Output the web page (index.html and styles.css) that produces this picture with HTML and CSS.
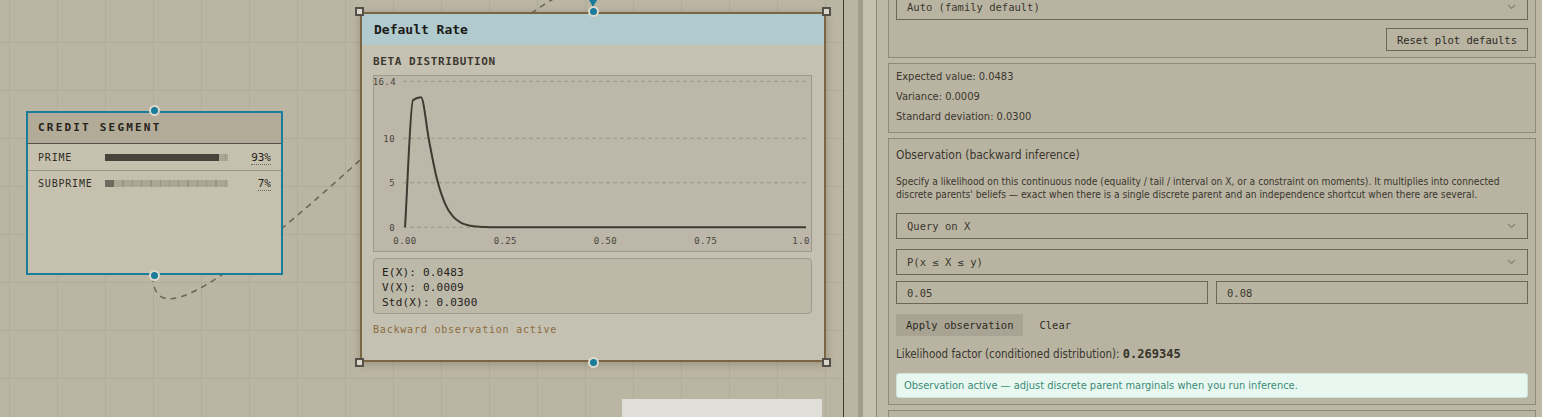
FILE: index.html
```html
<!DOCTYPE html>
<html>
<head>
    <link rel="stylesheet" href="styles.css">
    <title>Default Rate - Beta distribution</title>
</head>
<body>
<div class="app">
    <div class="canvas">
        <!-- edges sit under the nodes -->
        <svg class="edges" width="843" height="417">
            <path class="edge" d="M153 276 C153 412 593 -110 593 6"></path>
            <path class="edge-arrow" d="M589 0 L597 0 L593 7 Z"></path>
        </svg>

        <div class="node node-credit">
            <div class="node-header">CREDIT SEGMENT</div>
            <div class="state-row">
                <span class="state-name">PRIME</span>
                <span class="state-bar"><span class="state-fill" style="width: 93%"></span></span>
                <span class="state-value"><span>93%</span></span>
            </div>
            <div class="state-row">
                <span class="state-name">SUBPRIME</span>
                <span class="state-bar"><span class="state-fill state-fill-low" style="width: 7%"></span></span>
                <span class="state-value"><span>7%</span></span>
            </div>
            <span class="port port-top"></span>
            <span class="port port-bottom"></span>
        </div>

        <div class="node node-rate">
            <div class="node-header">Default Rate</div>
            <div class="node-body">
                <div class="dist-label">BETA DISTRIBUTION</div>
                <div class="chart">
                    <svg width="436" height="175">
                        <g class="grid">
                            <line x1="29" y1="5.3" x2="434" y2="5.3"></line>
                            <line x1="29" y1="62.3" x2="434" y2="62.3"></line>
                            <line x1="29" y1="106.8" x2="434" y2="106.8"></line>
                            <line x1="29" y1="151.3" x2="434" y2="151.3"></line>
                        </g>
                        <g class="y-labels">
                            <text x="22" y="8.5">16.4</text>
                            <text x="21" y="65.5">10</text>
                            <text x="21" y="110">5</text>
                            <text x="21" y="154.5">0</text>
                        </g>
                        <g class="x-labels">
                            <text x="31" y="168">0.00</text>
                            <text x="131.3" y="168">0.25</text>
                            <text x="231.5" y="168">0.50</text>
                            <text x="331.8" y="168">0.75</text>
                            <text x="430" y="168">1.00</text>
                        </g>
                        <path id="pdfCurve" class="curve" d=""></path>
                    </svg>
                </div>
                <div class="stats">
                    <div>E(X): 0.0483</div>
                    <div>V(X): 0.0009</div>
                    <div>Std(X): 0.0300</div>
                </div>
                <div class="obs-note">Backward observation active</div>
            </div>
            <span class="port port-top"></span>
            <span class="port port-bottom"></span>
            <span class="handle handle-tl"></span>
            <span class="handle handle-tr"></span>
            <span class="handle handle-bl"></span>
            <span class="handle handle-br"></span>
        </div>

        <div class="minimap"></div>
    </div>

    <div class="splitter"></div>

    <div class="panel">
        <div class="panel-scroll">
            <div class="section section-plot">
                <div class="select-wrap">
                    <select>
                        <option>Auto (family default)</option>
                    </select>
                    <svg class="chevron" width="9" height="6" viewBox="0 0 9 6"><polyline points="1,1 4.5,4.5 8,1"></polyline></svg>
                </div>
                <div class="reset-row">
                    <button type="button" class="btn-outline">Reset plot defaults</button>
                </div>
            </div>

            <div class="section section-stats">
                <p>Expected value: 0.0483</p>
                <p>Variance: 0.0009</p>
                <p>Standard deviation: 0.0300</p>
            </div>

            <div class="section section-obs">
                <h3 class="section-title">Observation (backward inference)</h3>
                <p class="section-desc">Specify a likelihood on this continuous node (equality / tail / interval on X, or a constraint on moments). It multiplies into connected discrete parents' beliefs — exact when there is a single discrete parent and an independence shortcut when there are several.</p>
                <div class="select-wrap select-query">
                    <select>
                        <option>Query on X</option>
                    </select>
                    <svg class="chevron" width="9" height="6" viewBox="0 0 9 6"><polyline points="1,1 4.5,4.5 8,1"></polyline></svg>
                </div>
                <div class="select-wrap select-kind">
                    <select>
                        <option>P(x ≤ X ≤ y)</option>
                    </select>
                    <svg class="chevron" width="9" height="6" viewBox="0 0 9 6"><polyline points="1,1 4.5,4.5 8,1"></polyline></svg>
                </div>
                <div class="range-row">
                    <input type="text" value="0.05">
                    <input type="text" value="0.08">
                </div>
                <div class="action-row">
                    <button type="button" class="btn-apply">Apply observation</button>
                    <button type="button" class="btn-plain">Clear</button>
                </div>
                <div class="likelihood">Likelihood factor (conditioned distribution): <span class="likelihood-value">0.269345</span></div>
                <div class="notice">Observation active — adjust discrete parent marginals when you run inference.</div>
            </div>

            <div class="section section-next"></div>
        </div>
    </div>
</div>

<script>
    // log-gamma (Lanczos approximation)
    function lgamma(x) {
        var c = [0.99999999999980993, 676.5203681218851, -1259.1392167224028,
            771.32342877765313, -176.61502916214059, 12.507343278686905,
            -0.13857109526572012, 9.9843695780195716e-6, 1.5056327351493116e-7];
        if (x < 0.5) {
            return Math.log(Math.PI / Math.sin(Math.PI * x)) - lgamma(1 - x);
        }
        x -= 1;
        var a = c[0];
        var t = x + 7.5;
        for (var i = 1; i < 9; i++) {
            a += c[i] / (x + i);
        }
        return 0.5 * Math.log(2 * Math.PI) + (x + 0.5) * Math.log(t) - t + Math.log(a);
    }

    // Beta parameters from mean and standard deviation
    var mean = 0.0483, sd = 0.03;
    var k = mean * (1 - mean) / (sd * sd) - 1;
    var a = mean * k, b = (1 - mean) * k;
    var lnB = lgamma(a) + lgamma(b) - lgamma(a + b);

    var xs = [], ys = [];
    for (var i = 0; i <= 50; i++) {
        var x = i / 50;
        var y = 0;
        if (x > 0 && x < 1) {
            y = Math.exp((a - 1) * Math.log(x) + (b - 1) * Math.log(1 - x) - lnB);
        }
        xs.push(31 + x * 401);
        ys.push(151.3 - y * 8.902);
    }

    // monotone cubic through the samples (no overshoot at the peak)
    var n = xs.length;
    var s = [], t = [];
    for (var i = 0; i < n - 1; i++) {
        s.push((ys[i + 1] - ys[i]) / (xs[i + 1] - xs[i]));
    }
    t[0] = s[0];
    t[n - 1] = s[n - 2];
    for (var i = 1; i < n - 1; i++) {
        if (s[i - 1] * s[i] <= 0) {
            t[i] = 0;
        } else {
            var p = (s[i - 1] + s[i]) / 2;
            t[i] = (Math.sign(s[i - 1]) + Math.sign(s[i])) *
                Math.min(Math.abs(s[i - 1]), Math.abs(s[i]), 0.5 * Math.abs(p));
        }
    }
    var d = "M" + xs[0].toFixed(1) + "," + ys[0].toFixed(1);
    for (var i = 0; i < n - 1; i++) {
        var h = (xs[i + 1] - xs[i]) / 3;
        d += " C" + (xs[i] + h).toFixed(1) + "," + (ys[i] + t[i] * h).toFixed(1) +
            " " + (xs[i + 1] - h).toFixed(1) + "," + (ys[i + 1] - t[i + 1] * h).toFixed(1) +
            " " + xs[i + 1].toFixed(1) + "," + ys[i + 1].toFixed(1);
    }
    document.getElementById("pdfCurve").setAttribute("d", d);
</script>
</body>
</html>
```

FILE: styles.css
```css
* {
    margin: 0;
    padding: 0;
    box-sizing: border-box;
}

body {
    font-family: "Liberation Sans Narrow", "DejaVu Sans Condensed", "Liberation Sans", sans-serif;
    font-stretch: condensed;
    color: #39362e;
    background-color: #bdb8a6;
    overflow: hidden;
}

.app {
    display: flex;
    width: 1542px;
    height: 417px;
    overflow: hidden;
}

/* Graph canvas */
.canvas {
    position: relative;
    flex: none;
    width: 844px;
    height: 417px;
    overflow: hidden;
    border-right: 1px solid #3c3a33;
    background-color: #bbb5a3;
    background-image:
        linear-gradient(to right, #b1ab99 1px, transparent 1px),
        linear-gradient(to bottom, #b1ab99 1px, transparent 1px);
    background-size: 48px 48px;
    background-position: 9px 42px;
    font-family: "DejaVu Sans Mono", "Liberation Mono", monospace;
}

.edges {
    position: absolute;
    left: 0;
    top: 0;
}

.edge {
    fill: none;
    stroke: #6c685c;
    stroke-width: 1.6;
    stroke-dasharray: 6 5;
}

.edge-arrow {
    fill: #1a7b9b;
}

.node {
    position: absolute;
    border: 2px solid #1a7d9c;
}

.port {
    position: absolute;
    left: 50%;
    width: 11px;
    height: 11px;
    margin-left: -5.5px;
    border-radius: 50%;
    background-color: #1a7b9b;
    border: 2px solid #ddd9cd;
}

.port-top {
    top: -8px;
}

.port-bottom {
    bottom: -8px;
}

/* Credit segment node */
.node-credit {
    left: 26px;
    top: 111px;
    width: 257px;
    height: 164px;
    background-color: #c6c1ae;
}

.node-credit .node-header {
    height: 31px;
    line-height: 30px;
    padding-left: 10px;
    background-color: #b1ab98;
    border-bottom: 1px solid #57534a;
    font-size: 11px;
    font-weight: bold;
    letter-spacing: 2.2px;
    color: #26231d;
}

.state-row {
    display: grid;
    grid-template-columns: 67px 123px 1fr;
    align-items: center;
    height: 26px;
    padding: 0 10px;
    font-size: 10px;
    letter-spacing: 0.8px;
    color: #2f2c25;
}

.state-row + .state-row {
    border-top: 1px solid #9c9685;
}

.state-bar {
    display: block;
    height: 7px;
    background: repeating-linear-gradient(90deg, #aca696 0, #aca696 8px, #9a9484 8px, #9a9484 9.3px);
}

.state-fill {
    display: block;
    height: 100%;
    background-color: #48443b;
}

.state-fill-low {
    background-color: #6f6a5e;
}

.state-value {
    text-align: right;
    font-size: 11px;
    letter-spacing: 0;
    color: #25221c;
}

.state-value span {
    border-bottom: 1px dotted #6b675b;
}

/* Default rate node */
.node-rate {
    left: 360px;
    top: 12px;
    width: 466px;
    height: 350px;
    border-color: #7b6644;
    background-color: #c5c1b2;
    box-shadow: 0 2px 8px rgba(70, 60, 40, 0.3);
}

.node-rate .node-header {
    height: 31px;
    line-height: 31px;
    padding-left: 12px;
    background-color: #b0cacd;
    font-size: 13px;
    font-weight: bold;
    color: #1b1a16;
}

.node-body {
    padding: 0 12px 0 11px;
}

.dist-label {
    margin-top: 10px;
    line-height: 14px;
    font-size: 11px;
    font-weight: bold;
    letter-spacing: 0.6px;
    color: #3b382f;
}

.chart {
    margin-top: 6px;
    height: 177px;
    border: 1px solid #9e998a;
    background-color: #bcb7a8;
    overflow: hidden;
}

.chart svg {
    display: block;
}

.grid line {
    stroke: #9a9585;
    stroke-width: 1;
    stroke-dasharray: 4 3;
}

.y-labels text,
.x-labels text {
    font-family: "DejaVu Sans Mono", "Liberation Mono", monospace;
    font-size: 9px;
    letter-spacing: 0.4px;
    fill: #4a463c;
}

.y-labels text {
    text-anchor: end;
}

.x-labels text {
    text-anchor: middle;
}

.curve {
    fill: none;
    stroke: #3d3a31;
    stroke-width: 2;
    stroke-linejoin: round;
}

.stats {
    margin-top: 6px;
    padding: 6px 8px 3px;
    border: 1px solid #9e998a;
    border-radius: 4px;
    background-color: #bdb9a9;
    font-size: 11px;
    line-height: 15px;
    letter-spacing: 0.2px;
    color: #24211b;
}

.obs-note {
    margin-top: 9px;
    line-height: 14px;
    font-size: 10px;
    letter-spacing: 0.8px;
    color: #8a6b3e;
}

.handle {
    position: absolute;
    width: 9px;
    height: 9px;
    border: 2px solid #55514a;
    background-color: #dad6ca;
}

.handle-tl { left: -7px; top: -7px; }
.handle-tr { right: -7px; top: -7px; }
.handle-bl { left: -7px; bottom: -7px; }
.handle-br { right: -7px; bottom: -7px; }

.minimap {
    position: absolute;
    left: 622px;
    top: 399px;
    width: 200px;
    height: 18px;
    background-color: #dfded8;
}

/* Splitter between canvas and panel */
.splitter {
    flex: none;
    width: 14px;
    background-color: #bbb5a3;
}

/* Properties panel */
.panel {
    flex: 1;
    border-left: 5px solid #a39d8c;
    padding-left: 13px;
    background-color: #c6c1af;
}

.panel-scroll {
    height: 100%;
    overflow: hidden;
    border-left: 1px solid #8e897a;
    padding: 0 6px 0 11px;
    background-color: #bdb8a6;
}

.section {
    border: 1px solid #8f8a7a;
    background-color: #b9b4a2;
    padding: 6px 7px;
    margin-bottom: 5px;
}

.section-plot {
    margin-top: -13px;
}

.select-wrap {
    position: relative;
}

.select-wrap select {
    display: block;
    width: 100%;
    height: 26px;
    padding-left: 10px;
    border: 1px solid #6b6759;
    border-radius: 0;
    background-color: transparent;
    appearance: none;
    -webkit-appearance: none;
    font-family: "DejaVu Sans Mono", "Liberation Mono", monospace;
    font-size: 10.5px;
    color: #3a372f;
}

.chevron {
    position: absolute;
    right: 12px;
    top: 10px;
}

.chevron polyline {
    fill: none;
    stroke: #868272;
    stroke-width: 1.1;
}

.reset-row {
    display: flex;
    justify-content: flex-end;
    margin-top: 8px;
}

button {
    font-family: "DejaVu Sans Mono", "Liberation Mono", monospace;
    font-size: 10.5px;
    color: #2e2b24;
    cursor: pointer;
}

.btn-outline {
    height: 23px;
    padding: 0 10px;
    border: 1px solid #6b6759;
    background-color: transparent;
}

.section-stats {
    padding: 3px 7px 5px;
}

.section-stats p {
    line-height: 20px;
    font-size: 11px;
}

.section-title {
    font-size: 12px;
    font-weight: normal;
    line-height: 20px;
}

.section-desc {
    margin-top: 10px;
    font-size: 10.2px;
    line-height: 13px;
}

.select-query {
    margin-top: 12px;
}

.select-kind {
    margin-top: 10px;
}

.range-row {
    display: flex;
    gap: 8px;
    margin-top: 6px;
}

.range-row input {
    flex: 1;
    min-width: 0;
    height: 23px;
    padding-left: 10px;
    border: 1px solid #6b6759;
    background-color: transparent;
    font-family: "DejaVu Sans Mono", "Liberation Mono", monospace;
    font-size: 10.5px;
    color: #3a372f;
}

.action-row {
    display: flex;
    gap: 6px;
    margin-top: 10px;
}

.btn-apply {
    height: 22px;
    padding: 0 10px;
    border: none;
    background-color: #a8a393;
}

.btn-plain {
    height: 22px;
    padding: 0 10px;
    border: none;
    background-color: transparent;
}

.likelihood {
    margin-top: 9px;
    line-height: 18px;
    font-size: 11.5px;
}

.likelihood-value {
    font-family: "DejaVu Sans Mono", "Liberation Mono", monospace;
    font-size: 12px;
    font-weight: bold;
    color: #36332b;
}

.notice {
    margin-top: 10px;
    height: 25px;
    line-height: 23px;
    padding-left: 7px;
    border: 1px solid #cde4d6;
    border-radius: 3px;
    background-color: #e8f8f0;
    font-size: 11px;
    color: #3b8a78;
}

.section-next {
    height: 40px;
}
```
